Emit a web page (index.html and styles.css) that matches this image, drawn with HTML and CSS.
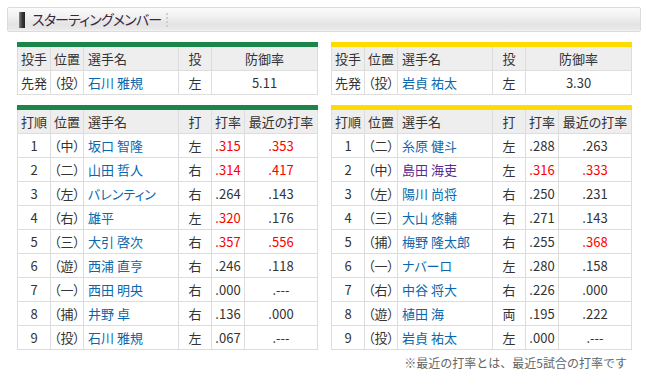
FILE: index.html
```html
<!DOCTYPE html>
<html lang="ja">
<head>
<meta charset="utf-8">
<title>スターティングメンバー</title>
<link rel="stylesheet" href="styles.css">
</head>
<body>
<div class="page">
  <div class="titlebar">
    <span class="mark"></span>
    <h2 class="title">スターティングメンバー</h2>
    <span class="sep"></span>
  </div>
  <div class="content">
    <div class="teams">
      <div class="team team-green">
        <table class="tbl">
          <colgroup><col class="c1"><col class="c2"><col class="c3"><col class="c4"><col class="c5"><col class="c6"></colgroup>
          <tr><th>投手</th><th>位置</th><th class="l">選手名</th><th>投</th><th colspan="2">防御率</th></tr>
          <tr><td>先発</td><td>（投）</td><td class="l"><a class="nm">石川 雅規</a></td><td>左</td><td colspan="2">5.11</td></tr>
        </table>
        <table class="tbl">
          <colgroup><col class="c1"><col class="c2"><col class="c3"><col class="c4"><col class="c5"><col class="c6"></colgroup>
          <tr><th>打順</th><th>位置</th><th class="l">選手名</th><th>打</th><th>打率</th><th>最近の打率</th></tr>
          <tr><td>1</td><td>（中）</td><td class="l"><a class="nm">坂口 智隆</a></td><td>左</td><td class="hi">.315</td><td class="hi">.353</td></tr>
          <tr><td>2</td><td>（二）</td><td class="l"><a class="nm">山田 哲人</a></td><td>右</td><td class="hi">.314</td><td class="hi">.417</td></tr>
          <tr><td>3</td><td>（左）</td><td class="l"><a class="nm">バレンティン</a></td><td>右</td><td>.264</td><td>.143</td></tr>
          <tr><td>4</td><td>（右）</td><td class="l"><a class="nm">雄平</a></td><td>左</td><td class="hi">.320</td><td>.176</td></tr>
          <tr><td>5</td><td>（三）</td><td class="l"><a class="nm">大引 啓次</a></td><td>右</td><td class="hi">.357</td><td class="hi">.556</td></tr>
          <tr><td>6</td><td>（遊）</td><td class="l"><a class="nm">西浦 直亨</a></td><td>右</td><td>.246</td><td>.118</td></tr>
          <tr><td>7</td><td>（一）</td><td class="l"><a class="nm">西田 明央</a></td><td>右</td><td>.000</td><td>.---</td></tr>
          <tr><td>8</td><td>（捕）</td><td class="l"><a class="nm">井野 卓</a></td><td>右</td><td>.136</td><td>.000</td></tr>
          <tr><td>9</td><td>（投）</td><td class="l"><a class="nm">石川 雅規</a></td><td>左</td><td>.067</td><td>.---</td></tr>
        </table>
      </div>
      <div class="team team-yellow">
        <table class="tbl">
          <colgroup><col class="c1"><col class="c2"><col class="c3"><col class="c4"><col class="c5"><col class="c6"></colgroup>
          <tr><th>投手</th><th>位置</th><th class="l">選手名</th><th>投</th><th colspan="2">防御率</th></tr>
          <tr><td>先発</td><td>（投）</td><td class="l"><a class="nm">岩貞 祐太</a></td><td>左</td><td colspan="2">3.30</td></tr>
        </table>
        <table class="tbl">
          <colgroup><col class="c1"><col class="c2"><col class="c3"><col class="c4"><col class="c5"><col class="c6"></colgroup>
          <tr><th>打順</th><th>位置</th><th class="l">選手名</th><th>打</th><th>打率</th><th>最近の打率</th></tr>
          <tr><td>1</td><td>（二）</td><td class="l"><a class="nm">糸原 健斗</a></td><td>左</td><td>.288</td><td>.263</td></tr>
          <tr><td>2</td><td>（中）</td><td class="l"><a class="nm visited">島田 海吏</a></td><td>左</td><td class="hi">.316</td><td class="hi">.333</td></tr>
          <tr><td>3</td><td>（左）</td><td class="l"><a class="nm">陽川 尚将</a></td><td>右</td><td>.250</td><td>.231</td></tr>
          <tr><td>4</td><td>（三）</td><td class="l"><a class="nm">大山 悠輔</a></td><td>右</td><td>.271</td><td>.143</td></tr>
          <tr><td>5</td><td>（捕）</td><td class="l"><a class="nm">梅野 隆太郎</a></td><td>右</td><td>.255</td><td class="hi">.368</td></tr>
          <tr><td>6</td><td>（一）</td><td class="l"><a class="nm">ナバーロ</a></td><td>左</td><td>.280</td><td>.158</td></tr>
          <tr><td>7</td><td>（右）</td><td class="l"><a class="nm">中谷 将大</a></td><td>右</td><td>.226</td><td>.000</td></tr>
          <tr><td>8</td><td>（遊）</td><td class="l"><a class="nm">植田 海</a></td><td>両</td><td>.195</td><td>.222</td></tr>
          <tr><td>9</td><td>（投）</td><td class="l"><a class="nm">岩貞 祐太</a></td><td>左</td><td>.000</td><td>.---</td></tr>
        </table>
      </div>
    </div>
    <p class="note">※最近の打率とは、最近5試合の打率です</p>
  </div>
</div>
</body>
</html>
```

FILE: styles.css
```css
html, body {
  margin: 0;
  padding: 0;
  background: #fff;
}
body {
  font-family: "Noto Sans CJK JP", "Noto Sans", sans-serif;
  font-size: 13px;
  color: #333;
}
.page {
  padding: 7px 6px 0 7px;
}
.titlebar {
  display: flex;
  align-items: center;
  height: 23px;
  border: 1px solid #dcdcdc;
  border-radius: 2px;
  background: linear-gradient(#fbfbfb 0%, #f0f0f0 40%, #e4e4e4 70%, #e8e8e8 90%, #f2f2f2 100%);
  padding-left: 11px;
}
.mark {
  width: 6px;
  height: 16px;
  background: linear-gradient(to right, #888 0%, #3a3a3a 50%, #222 100%);
  margin-right: 7px;
}
.title {
  margin: 0;
  font-size: 14px;
  font-weight: normal;
  color: #3a2840;
  font-feature-settings: "palt";
  letter-spacing: -0.8px;
  line-height: 23px;
}
.sep {
  width: 0;
  height: 14px;
  border-left: 2px dotted #cfcfcf;
  margin-left: 5px;
}
.content {
  padding: 10px 10px 0 10px;
}
.teams {
  display: flex;
  gap: 14px;
}
.team {
  width: 300px;
  display: flex;
  flex-direction: column;
  gap: 10px;
}
.tbl {
  width: 300px;
  border-collapse: collapse;
  table-layout: fixed;
  font-feature-settings: "palt";
}
.team-green .tbl { border-top: 5px solid #1b8649; }
.team-yellow .tbl { border-top: 5px solid #ffdc00; }
.c1, .c2, .c4, .c5 { width: 33px; }
.c3 { width: 95px; }
.c6 { width: 73px; }
.tbl th, .tbl td {
  border: 1px solid #dddddd;
  height: 23px;
  padding: 0 3px;
  text-align: center;
  font-weight: normal;
  white-space: nowrap;
  line-height: 16px;
}
.tbl th {
  background: #eeeeee;
  color: #333;
}
.tbl td { background: #fff; }
.tbl .l { text-align: left; padding-left: 4px; }
.nm {
  color: #0a67ad;
  text-decoration: none;
}
.nm.visited { color: #5a2b8f; }
.hi { color: #ff0000; }
.note {
  margin: 0;
  padding: 5px 4px 0 0;
  text-align: right;
  font-size: 12px;
  color: #666;
  line-height: 16px;
}
```
